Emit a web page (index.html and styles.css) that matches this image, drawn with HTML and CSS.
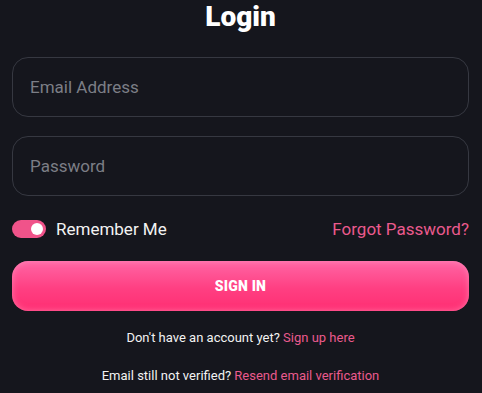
FILE: index.html
```html
<!DOCTYPE html>
<html>
<head>
<meta charset="utf-8">
<link rel="stylesheet" href="styles.css">
</head>
<body>
<main class="login">
  <h1 class="title">Login</h1>
  <form class="form">
    <div class="field"><input class="input" type="email" placeholder="Email Address"></div>
    <div class="field"><input class="input" type="password" placeholder="Password"></div>
    <div class="options">
      <label class="remember">
        <span class="toggle"><span class="knob"></span></span>
        <span class="remember-text">Remember Me</span>
      </label>
      <a class="link forgot" href="#">Forgot Password?</a>
    </div>
    <button class="btn" type="button">SIGN IN</button>
    <p class="note">Don't have an account yet? <a class="link" href="#">Sign up here</a></p>
    <p class="note">Email still not verified? <a class="link" href="#">Resend email verification</a></p>
  </form>
</main>
</body>
</html>
```
FILE: styles.css
```css
html, body {
  margin: 0;
  background: #15161d;
  font-family: Roboto, "Noto Sans", sans-serif;
  color: #ffffff;
}
.login {
  padding: 0 13px 0 12px;
}
.title {
  margin: 0;
  text-align: center;
  font-size: 28px;
  font-weight: 900;
  line-height: 33px;
  color: #ffffff;
}
.form {
  display: flex;
  flex-direction: column;
  margin-top: 24px;
}
.field {
  margin-bottom: 19px;
}
.input {
  box-sizing: border-box;
  width: 100%;
  height: 60px;
  border: 1px solid #363841;
  border-radius: 16px;
  background: transparent;
  padding: 0 17px;
  font-family: inherit;
  font-size: 17px;
  color: #fff;
  outline: none;
}
.input::placeholder {
  color: #7c7e86;
}
.options {
  display: flex;
  align-items: center;
  justify-content: space-between;
  height: 26px;
  margin-top: 1px;
}
.remember {
  display: flex;
  align-items: center;
  gap: 10px;
}
.toggle {
  width: 34px;
  height: 18px;
  border-radius: 9px;
  background: #f0538a;
  position: relative;
}
.knob {
  position: absolute;
  top: 3px;
  right: 3px;
  width: 12px;
  height: 12px;
  border-radius: 50%;
  background: #fff;
}
.remember-text {
  font-size: 17px;
  color: #f2f2f2;
}
.link {
  color: #ea5a8d;
  text-decoration: none;
}
.forgot {
  font-size: 17px;
}
.btn {
  margin-top: 19px;
  height: 50px;
  border: none;
  border-radius: 16px;
  background: linear-gradient(180deg, #ff66a5 0%, #ff3f82 55%, #ff2e72 100%);
  box-shadow: inset 0 0 6px rgba(255, 160, 200, 0.6);
  color: #fff;
  font-family: inherit;
  font-size: 14px;
  font-weight: 900;
  letter-spacing: 0.2px;
}
.note {
  margin: 19px 0 0;
  text-align: center;
  font-size: 13px;
  line-height: 16px;
  color: #f2f2f2;
}
.note + .note {
  margin-top: 22px;
}
```
